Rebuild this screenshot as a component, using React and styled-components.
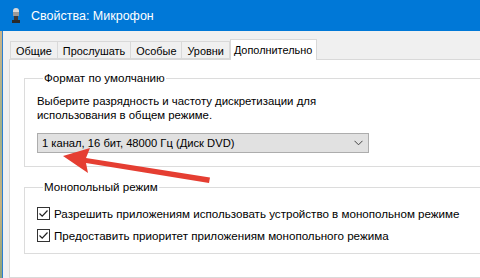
import React from 'react';
import styled, { createGlobalStyle } from 'styled-components';

const Global = createGlobalStyle`
  html, body {
    margin: 0;
    padding: 0;
    background: #f0f0f0;
  }
  body {
    font-family: "Liberation Sans", "Noto Sans", sans-serif;
    font-size: 11.6px;
    color: #000;
  }
`;

const Page = styled.div`
  position: relative;
  width: 480px;
  height: 278px;
  overflow: hidden;
  background: #f0f0f0;
`;

const TitleBar = styled.div`
  height: 31px;
  background: #0078d7;
  display: flex;
  align-items: center;
  padding-left: 12px;
  gap: 11px;
  color: #fff;
  font-size: 12.5px;
  box-sizing: border-box;
`;

const Body = styled.div`
  display: flex;
  height: 247px;
`;

const DesktopEdge = styled.div`
  width: 2px;
  background: linear-gradient(#c9b48a, #9fb08a 40%, #c8b27e 70%, #8aa37c);
`;

const Frame = styled.div`
  flex: 1;
  border-left: 1px solid #2a7ed2;
  padding: 7px 0 0 6px;
  display: flex;
  flex-direction: column;
  min-width: 0;
`;

const TabStrip = styled.div`
  display: flex;
  align-items: flex-end;
  padding-left: 1px;
  height: 21px;
  position: relative;
  z-index: 1;
  font-size: 10.9px;
`;

const Tab = styled.div`
  box-sizing: border-box;
  height: ${p => (p.active ? '21px' : '18px')};
  margin-bottom: ${p => (p.active ? '-1px' : '0')};
  padding: 0 ${p => (p.active ? '4px' : '5px')} 0 ${p => (p.active ? '3px' : '5px')};
  display: flex;
  align-items: center;
  padding-top: ${p => (p.active ? '0' : '1px')};
  background: ${p => (p.active ? '#fff' : '#f0f0f0')};
  border: 1px solid #d9d9d9;
  border-bottom: ${p => (p.active ? 'none' : '1px solid #d9d9d9')};
  border-left: ${p => (p.first || p.active ? '1px solid #d9d9d9' : 'none')};
  white-space: nowrap;
`;

const Panel = styled.div`
  flex: 1;
  background: #fff;
  border: 1px solid #d9d9d9;
  margin-right: -40px;
  padding: 10px 0 0 14px;
`;

const Group = styled.fieldset`
  margin: 0 0 12px 0;
  width: 520px;
  border: 1px solid #dcdcdc;
  padding: 0 0 ${p => p.bottom}px 12px;
  min-width: 0;
`;

const Legend = styled.legend`
  padding: 0 1px;
  margin-left: 6px;
  line-height: 16px;
`;

const Hint = styled.p`
  margin: 8px 0 0 0;
  line-height: 14px;
  width: 340px;
  font-size: 11.4px;
`;

const Select = styled.div`
  box-sizing: border-box;
  margin-top: 11px;
  width: 332px;
  height: 20px;
  background: #e1e1e1;
  border: 1px solid #adadad;
  display: flex;
  align-items: center;
  justify-content: space-between;
  padding: 0 5px 0 4px;
  font-size: 11.2px;
`;

const CheckList = styled.div`
  display: flex;
  flex-direction: column;
  gap: 6px;
  padding-top: 10px;
`;

const CheckRow = styled.label`
  display: flex;
  align-items: center;
  gap: 4px;
  height: 16px;
  font-size: 11.6px;
`;

const Box = styled.span`
  box-sizing: border-box;
  width: 13px;
  height: 13px;
  border: 1px solid #333;
  background: #fff;
  display: flex;
  align-items: center;
  justify-content: center;
`;

const Arrow = styled.svg`
  position: absolute;
  left: 0;
  top: 0;
  pointer-events: none;
`;

const Mic = () => (
  <svg width="8" height="15" viewBox="0 0 8 15">
    <rect x="1" y="0" width="6" height="8" rx="3" fill="#d8d8d8" />
    <rect x="1" y="4" width="6" height="4" fill="#9a9a9a" />
    <rect x="2" y="8" width="4" height="4" fill="#3a3a3a" />
    <rect x="0" y="12" width="8" height="3" fill="#2a2a2a" />
  </svg>
);

const Check = () => (
  <svg width="11" height="11" viewBox="0 0 11 11">
    <path d="M1.5 5.5 L4.2 8.2 L9.5 2.5" fill="none" stroke="#222" strokeWidth="1.2" />
  </svg>
);

const Chevron = () => (
  <svg width="9" height="6" viewBox="0 0 9 6">
    <path d="M0.5 0.8 L4.5 4.8 L8.5 0.8" fill="none" stroke="#444" strokeWidth="1" />
  </svg>
);

const tabs = ['Общие', 'Прослушать', 'Особые', 'Уровни', 'Дополнительно'];

const App = () => {
  return (
    <Page>
      <Global />
      <TitleBar>
        <Mic />
        <span>Свойства: Микрофон</span>
      </TitleBar>
      <Body>
        <DesktopEdge />
        <Frame>
          <TabStrip>
            {tabs.map((t, i) => (
              <Tab key={t} first={i === 0} active={i === tabs.length - 1}>
                {t}
              </Tab>
            ))}
          </TabStrip>
          <Panel>
            <Group bottom={13}>
              <Legend>Формат по умолчанию</Legend>
              <Hint>
                Выберите разрядность и частоту дискретизации для использования в общем режиме.
              </Hint>
              <Select>
                <span>1 канал, 16 бит, 48000 Гц (Диск DVD)</span>
                <Chevron />
              </Select>
            </Group>
            <Group bottom={10}>
              <Legend>Монопольный режим</Legend>
              <CheckList>
                <CheckRow>
                  <Box><Check /></Box>
                  Разрешить приложениям использовать устройство в монопольном режиме
                </CheckRow>
                <CheckRow>
                  <Box><Check /></Box>
                  Предоставить приоритет приложениям монопольного режима
                </CheckRow>
              </CheckList>
            </Group>
          </Panel>
        </Frame>
      </Body>
      <Arrow width="480" height="278" viewBox="0 0 480 278">
        <path d="M210 177.5 L86 158 L90 148 L63 156 L88 173 L86 163 L209 183 Z" fill="#e53e32" />
      </Arrow>
    </Page>
  );
};

export default App;
